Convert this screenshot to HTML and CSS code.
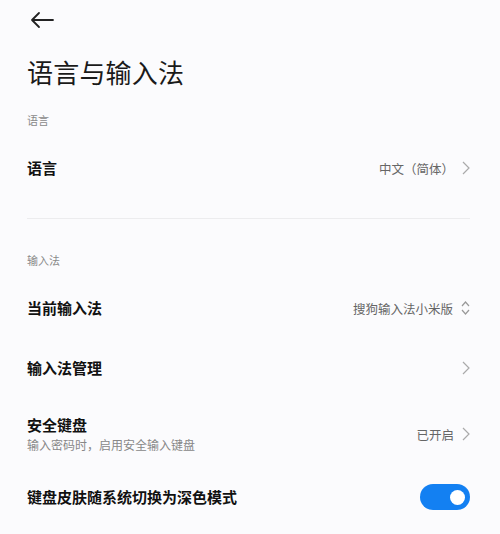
FILE: index.html
```html
<!DOCTYPE html>
<html lang="zh">
<head>
<meta charset="utf-8">
<link rel="stylesheet" href="styles.css">
</head>
<body>
<div class="page">
  <div class="topbar">
    <svg class="back" width="24" height="18" viewBox="0 0 24 18"><path d="M23 9H2M9 2L2 9L9 16" fill="none" stroke="#222" stroke-width="1.8" stroke-linecap="round" stroke-linejoin="round"/></svg>
  </div>
  <h1 class="title">语言与输入法</h1>

  <div class="section-label first">语言</div>
  <div class="row">
    <div class="row-title">语言</div>
    <div class="row-right"><span class="value">中文（简体）</span><svg class="chev" width="8" height="14" viewBox="0 0 8 14"><path d="M1 1L7 7L1 13" fill="none" stroke="#aaa" stroke-width="1.2"/></svg></div>
  </div>
  <div class="divider"></div>

  <div class="section-label">输入法</div>
  <div class="row">
    <div class="row-title">当前输入法</div>
    <div class="row-right"><span class="value">搜狗输入法小米版</span><svg class="chev" width="9" height="16" viewBox="0 0 9 16"><path d="M1 6L4.5 2L8 6M1 10L4.5 14L8 10" fill="none" stroke="#999" stroke-width="1.2"/></svg></div>
  </div>
  <div class="row">
    <div class="row-title">输入法管理</div>
    <div class="row-right"><svg class="chev" width="8" height="14" viewBox="0 0 8 14"><path d="M1 1L7 7L1 13" fill="none" stroke="#aaa" stroke-width="1.2"/></svg></div>
  </div>
  <div class="row tall">
    <div class="row-text">
      <div class="row-title">安全键盘</div>
      <div class="row-sub">输入密码时，启用安全输入键盘</div>
    </div>
    <div class="row-right"><span class="value">已开启</span><svg class="chev" width="8" height="14" viewBox="0 0 8 14"><path d="M1 1L7 7L1 13" fill="none" stroke="#aaa" stroke-width="1.2"/></svg></div>
  </div>
  <div class="row last">
    <div class="row-title">键盘皮肤随系统切换为深色模式</div>
    <div class="toggle"><div class="knob"></div></div>
  </div>
</div>
</body>
</html>
```
FILE: styles.css
```css
html, body {
  margin: 0;
  padding: 0;
  background: #fbfbfd;
}
body {
  font-family: "Noto Sans CJK SC", "Noto Sans", sans-serif;
  color: #111;
  width: 500px;
  height: 534px;
  overflow: hidden;
}
.page {
  padding: 0 30px 0 27px;
}
.topbar {
  height: 40px;
  display: flex;
  align-items: center;
}
.back {
  margin-left: 3px;
}
.title {
  margin: 14px 0 0;
  font-size: 26px;
  line-height: 36px;
  font-weight: 400;
  color: #1a1a1a;
  letter-spacing: 0.2px;
}
.section-label {
  font-size: 11px;
  line-height: 16px;
  color: #8a8a8a;
  margin-top: 33px;
  margin-bottom: 10px;
}
.section-label.first {
  margin-top: 22px;
}
.row {
  height: 60px;
  display: flex;
  align-items: center;
  justify-content: space-between;
}
.row.tall {
  height: 72px;
}
.row.last {
  height: 54px;
}
.row-title {
  font-size: 15px;
  line-height: 20px;
  font-weight: 700;
  color: #111;
}
.row-sub {
  font-size: 12px;
  line-height: 16px;
  color: #888;
  margin-top: 2px;
}
.row-right {
  display: flex;
  align-items: center;
}
.value {
  font-size: 12.5px;
  color: #666;
  margin-right: 8px;
}
.chev {
  display: block;
  margin-right: 0;
}
.divider {
  margin-top: 20px;
  height: 1px;
  background: #ececee;
}
.toggle {
  width: 50px;
  height: 26px;
  border-radius: 13px;
  background: #1380f2;
  display: flex;
  align-items: center;
  justify-content: flex-end;
  padding-right: 5px;
  box-sizing: border-box;
}
.knob {
  width: 15px;
  height: 15px;
  border-radius: 50%;
  background: #fff;
}
```
